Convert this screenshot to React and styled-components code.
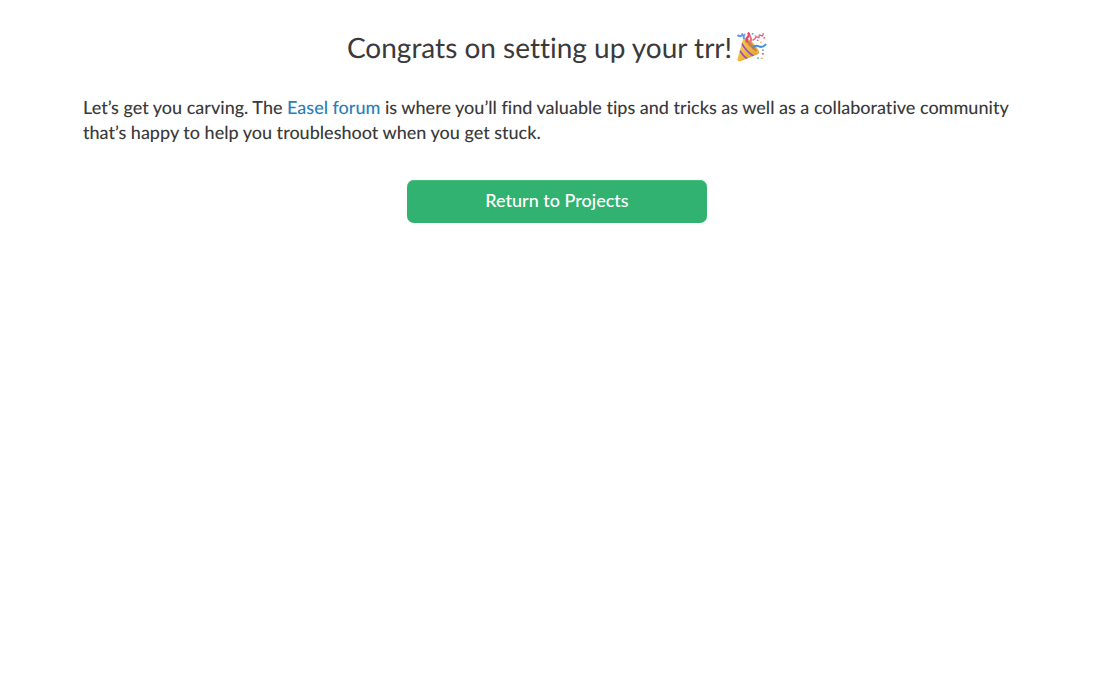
import React from "react";
import styled, { createGlobalStyle } from "styled-components";

const GlobalStyle = createGlobalStyle`
  *, *::before, *::after { box-sizing: border-box; }
  body {
    margin: 0;
    background: #fff;
    color: #3a3a3a;
    font-family: Lato, "Open Sans", sans-serif;
    font-size: 18px;
    font-weight: 500;
    font-variant-ligatures: none;
    text-rendering: geometricPrecision;
    line-height: 25px;
  }
`;

const Page = styled.main`
  display: flex;
  flex-direction: column;
  align-items: center;
  padding: 27px 87px 28px 83px;
`;

const Title = styled.h1`
  display: flex;
  align-items: center;
  gap: 4px;
  margin: 0 0 28px;
  font-size: 28px;
  font-weight: 400;
  line-height: 40px;
`;

const PartyIcon = styled.svg`
  flex: none;
  width: 31px;
  height: 30px;
`;

const Message = styled.p`
  align-self: stretch;
  margin: 0 0 35px;
`;

const ForumLink = styled.a`
  color: #2980b9;
  text-decoration: none;
`;

const PrimaryButton = styled.button`
  width: 300px;
  max-width: 100%;
  padding: 8px 16px 10px;
  border: 0;
  border-radius: 7px;
  background: #32b270;
  box-shadow: inset 0 1px #48be80;
  color: #fff;
  font: inherit;
  cursor: pointer;
`;

function PartyPopper() {
  return (
    <PartyIcon viewBox="20 16 92 90" role="img" aria-label="Party popper">
      <defs>
        <linearGradient id="cone" x1="0" y1="0" x2="1" y2="1">
          <stop offset="0" stopColor="#f8d866" />
          <stop offset="0.5" stopColor="#f3b93d" />
          <stop offset="1" stopColor="#d98a25" />
        </linearGradient>
        <clipPath id="coneShape">
          <path d="M41 35 24 97Q23 107 33 104L86 82Q94 76 75 55 55 30 41 35Z" />
        </clipPath>
      </defs>
      <g clipPath="url(#coneShape)">
        <path d="M20 25h75v82H20Z" fill="url(#cone)" />
        <path d="M37 50Q48 72 73 89M31 72Q41 87 53 97" fill="none" stroke="#9250c8" strokeWidth="5" />
      </g>
      <path d="M44 35Q56 33 75 54 91 73 85 80 72 78 56 61 42 45 44 35Z" fill="#eab344" />
      <path d="M51 39Q62 43 74 59 83 70 82 76 71 71 60 58 50 46 51 39Z" fill="#c68443" />
      <path d="M52 47Q50 34 56 29T55 18" fill="none" stroke="#e64565" strokeWidth="7" />
      <path d="M62 48Q68 36 60 26" fill="none" stroke="#ec718c" strokeWidth="6" />
      <path d="M71 62Q78 54 88 59T108 54" fill="none" stroke="#438ddd" strokeWidth="6" strokeLinecap="round" />
      <path d="M24 25Q30 31 37 26T43 37" fill="none" stroke="#5f9ce5" strokeWidth="6" />
      <path d="M69 41 77 36 79 30 88 33 90 25 99 28 102 20" fill="none" stroke="#e15f91" strokeWidth="4" />
      <g fill="#e26883">
        <rect x="82" y="39" width="5" height="4" />
        <rect x="102" y="31" width="5" height="5" />
        <rect x="97" y="79" width="6" height="5" />
        <rect x="36" y="19" width="4" height="4" />
      </g>
      <g fill="#6ca7e3">
        <rect x="67" y="19" width="5" height="5" />
        <rect x="43" y="21" width="5" height="6" />
        <rect x="98" y="68" width="5" height="5" />
        <rect x="83" y="92" width="5" height="5" />
      </g>
      <g fill="#f1b35b">
        <rect x="75" y="25" width="5" height="4" />
        <rect x="92" y="45" width="4" height="4" />
        <rect x="94" y="93" width="6" height="4" />
      </g>
    </PartyIcon>
  );
}

export default function App() {
  return (
    <>
      <GlobalStyle />
      <Page>
        <Title>
          Congrats on setting up your trr!
          <PartyPopper />
        </Title>
        <Message>
          Let’s get you carving. The <ForumLink href="#forum">Easel forum</ForumLink> is
          where you’ll find valuable tips and tricks as well as a collaborative community
          that’s happy to help you troubleshoot when you get stuck.
        </Message>
        <PrimaryButton type="button">Return to Projects</PrimaryButton>
      </Page>
    </>
  );
}
